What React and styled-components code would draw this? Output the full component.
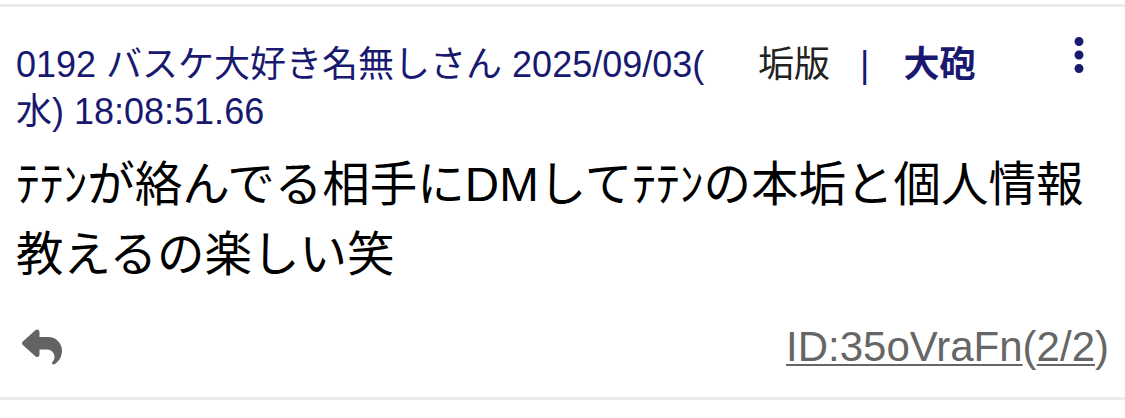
import React from "react";
import styled, { createGlobalStyle } from "styled-components";
import { FaReply } from "react-icons/fa6";
import { MdMoreVert } from "react-icons/md";

const GlobalStyle = createGlobalStyle`
  html, body {
    margin: 0;
    padding: 0;
    background: #ffffff;
  }
  body {
    font-family: "Liberation Sans", "Noto Sans CJK JP", sans-serif;
  }
`;

const Post = styled.article`
  margin-top: 4px;
  border-top: 3px solid #ebebeb;
  border-bottom: 3px solid #ebebeb;
  padding: 0 16px;
`;

const Header = styled.header`
  display: flex;
  align-items: flex-start;
  padding-top: 34px;
`;

const NameBlock = styled.div`
  width: 705px;
  font-size: 36px;
  line-height: 47px;
  color: #191970;
  line-break: anywhere;
`;

const Meta = styled.div`
  display: flex;
  align-items: center;
  margin-left: 37px;
  font-size: 36px;
  line-height: 47px;
`;

const MetaLink = styled.span`
  color: ${(props) => (props.$strong ? "#191970" : "#222222")};
  font-weight: ${(props) => (props.$strong ? 700 : 400)};
`;

const Sep = styled.span`
  color: #191970;
  margin: 0 34px 0 30px;
`;

const MenuButton = styled.button`
  margin-left: auto;
  margin-right: 3px;
  margin-top: -13px;
  padding: 0;
  border: none;
  background: none;
  color: #191970;
  display: flex;
`;

const Body = styled.p`
  margin: 15px 0 0;
  font-family: "Liberation Sans", "Noto Sans CJK JP", sans-serif;
  font-size: 47.5px;
  line-height: 70px;
  color: #000000;
`;

const Footer = styled.footer`
  display: flex;
  align-items: center;
  justify-content: space-between;
  padding: 33px 0 26px 6px;
  height: 48px;
`;

const ReplyButton = styled.button`
  padding: 0;
  border: none;
  background: none;
  color: #636363;
  display: flex;
`;

const IdText = styled.div`
  font-size: 42px;
  line-height: 48px;
  color: #666666;
`;

const Under = styled.span`
  text-decoration: underline;
  text-decoration-thickness: 2px;
  text-underline-offset: 3px;
`;

export default function App() {
  return (
    <>
      <GlobalStyle />
      <Post>
        <Header>
          <NameBlock>0192 バスケ大好き名無しさん 2025/09/03(水) 18:08:51.66</NameBlock>
          <Meta>
            <MetaLink>垢版</MetaLink>
            <Sep>|</Sep>
            <MetaLink $strong>大砲</MetaLink>
          </Meta>
          <MenuButton aria-label="menu">
            <MdMoreVert size={54} />
          </MenuButton>
        </Header>
        <Body>ﾃﾃﾝが絡んでる相手にDMしてﾃﾃﾝの本垢と個人情報教えるの楽しい笑</Body>
        <Footer>
          <ReplyButton aria-label="reply">
            <FaReply size={40} />
          </ReplyButton>
          <IdText>
            <Under>ID:35oVraFn</Under>(<Under>2/2</Under>)
          </IdText>
        </Footer>
      </Post>
    </>
  );
}
